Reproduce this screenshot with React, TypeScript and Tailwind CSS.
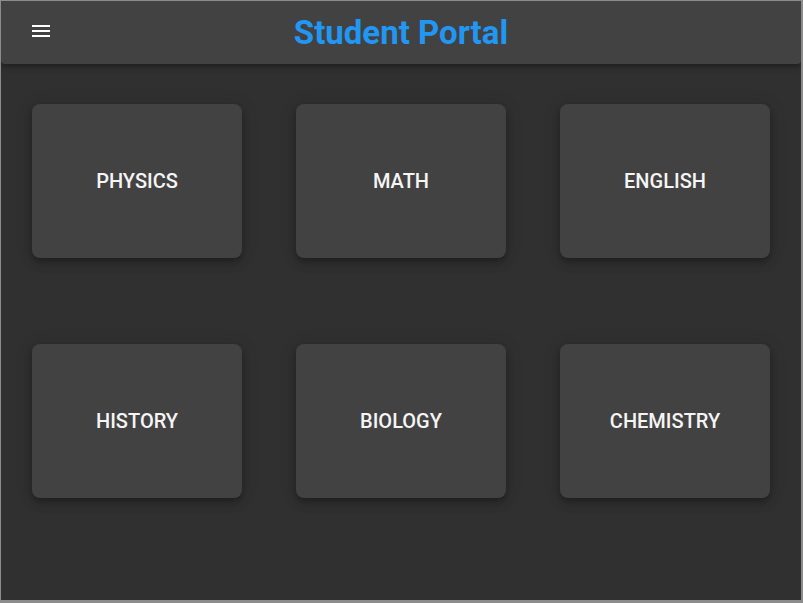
const subjects = ['PHYSICS', 'MATH', 'ENGLISH', 'HISTORY', 'BIOLOGY', 'CHEMISTRY'];

export default function App() {
  return (
    <div className="h-screen w-full overflow-hidden bg-[#303030] border-l border-t border-r-2 border-b-[3px] border-[#8c8c8c] font-['Roboto',sans-serif]">
      {/* App bar */}
      <header className="relative flex h-[63px] items-center justify-center rounded-b bg-[#424242] shadow-[0_2px_4px_-1px_rgba(0,0,0,0.2),0_4px_5px_0_rgba(0,0,0,0.14),0_1px_10px_0_rgba(0,0,0,0.12)]">
        <button className="absolute left-[28px] top-[18px] flex h-6 w-6 items-center justify-center text-white">
          <svg viewBox="0 0 24 24" className="h-6 w-6" fill="currentColor">
            <path d="M3 18h18v-2H3v2zm0-5h18v-2H3v2zm0-7v2h18V6H3z" />
          </svg>
        </button>
        <h1 className="text-[33px] font-bold leading-none text-[#2196f3]">Student Portal</h1>
      </header>

      {/* Subject cards */}
      <main className="grid grid-cols-[210px_210px_210px] gap-x-[54px] gap-y-[86px] pl-[31px] pt-[40px]">
        {subjects.map((s) => (
          <div
            key={s}
            className="flex h-[154px] items-center justify-center rounded-lg bg-[#424242] shadow-[0_3px_5px_-1px_rgba(0,0,0,0.2),0_6px_10px_0_rgba(0,0,0,0.14),0_1px_18px_0_rgba(0,0,0,0.12)]"
          >
            <span className="text-[20px] font-medium text-[#f5f5f5]">{s}</span>
          </div>
        ))}
      </main>
    </div>
  );
}
